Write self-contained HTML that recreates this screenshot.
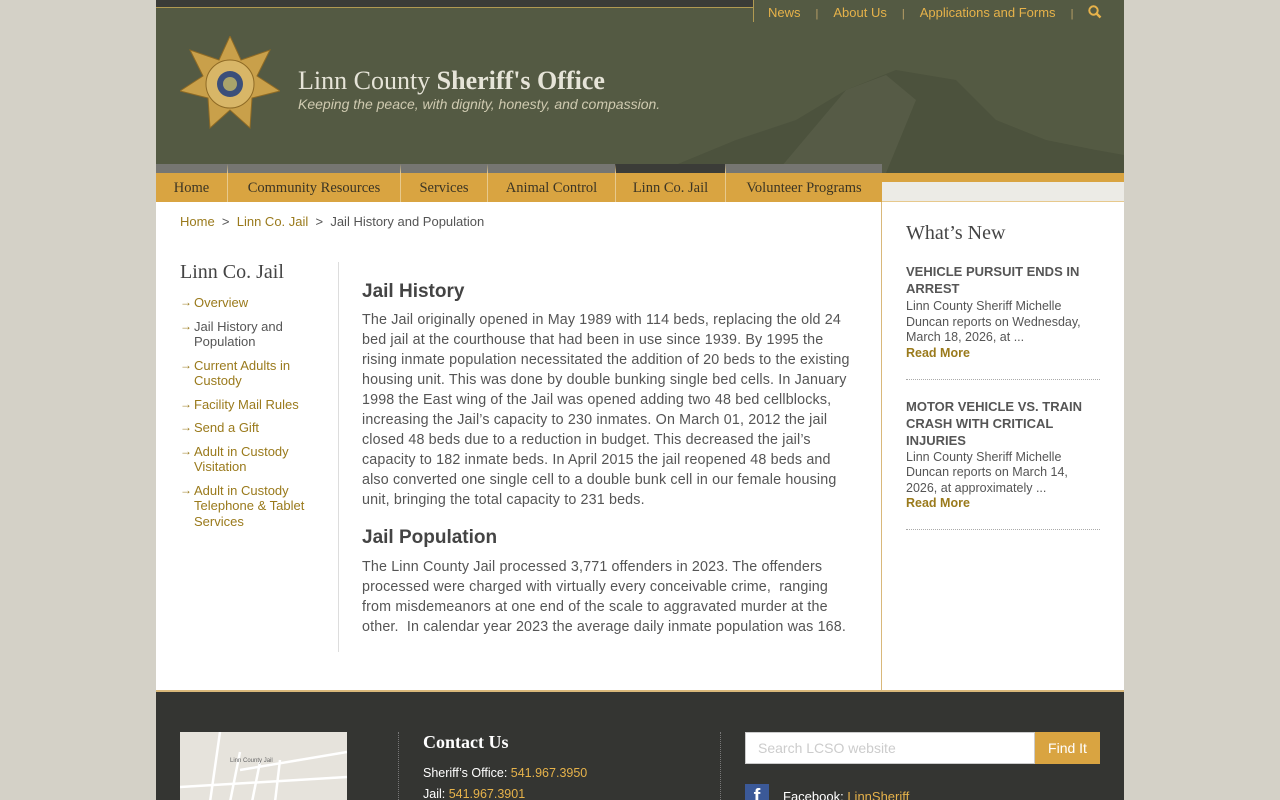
<!DOCTYPE html>
<html><head><meta charset="utf-8"><style>
*{margin:0;padding:0;box-sizing:border-box}
html,body{width:1280px;height:800px;overflow:hidden}
body{background:#d4d1c7;font-family:"Liberation Sans",sans-serif;font-size:14px;color:#555}
.slab{font-family:"Liberation Serif",serif}
#wrap{position:absolute;left:156px;top:0;width:968px;height:800px;overflow:hidden}
#hdr{position:absolute;left:0;top:0;width:968px;height:173px;background:#545a43;overflow:hidden}
#topstrip{position:absolute;left:0;top:0;width:597px;height:8px;background:#3b3c38;border-bottom:1px solid #b19a52}
#vline{position:absolute;left:597px;top:0;width:1px;height:22px;background:#b19a52}
#util{position:absolute;left:612px;top:5px;font-size:13px;color:#e6b24a;white-space:nowrap}
#util span.s{color:#bfa46a;margin:0 15px;font-size:11px}
.a{color:#9a7a1c;text-decoration:none}
#nav{position:absolute;left:0;top:164px;height:38px;width:726px;display:flex}
#nav div{background:#d9a441;border-top:9px solid #767672;border-left:1px solid #e7c98d;height:38px;line-height:30px;font-size:14.5px;color:#3c3524;text-align:center}
#navr{position:absolute;left:726px;top:173px;width:242px;height:29px;background:#ecebe6;border-top:9px solid #d9a441;border-bottom:1px solid #e7c98d}
#main{position:absolute;left:0;top:202px;width:968px;height:488px;background:#fff}
#side{position:absolute;left:725px;top:0;width:243px;height:488px;border-left:1px solid #d9b87a}
#ftr{position:absolute;left:0;top:690px;width:968px;height:110px;background:#343532;border-top:2px solid #d9b87a;overflow:hidden}
.sn li{list-style:none;position:relative;padding-left:14px;color:#9a7a1c;font-size:13px;line-height:15.5px;margin-bottom:8px}
.sn li:before{content:"→";position:absolute;left:0;top:0;color:#9a7a1c;font-size:12px}
p.b{line-height:20px;color:#555;font-size:14.3px;white-space:nowrap;letter-spacing:.15px}
h2{font-size:19px;color:#444;font-weight:bold}
.news h4{font-size:13px;color:#555;font-weight:bold;line-height:17px}
.news p{font-size:12.5px;line-height:15.5px;color:#555}
.news .rm{color:#9a7a1c;font-weight:bold;font-size:12.5px}
</style></head><body><div id="wrap">
<div id="hdr">
<svg style="position:absolute;left:500px;top:30px" width="468" height="143"><path d="M0 143 L80 110 L140 90 L190 60 L240 40 L300 50 L340 90 L390 110 L440 120 L468 125 L468 143Z" fill="#4c523d"/><path d="M120 143 L190 60 L230 45 L260 70 L230 143Z" fill="#5d634c" opacity=".6"/></svg>
<div id="topstrip"></div><div id="vline"></div>
<div id="util">News<span class="s">|</span>About Us<span class="s">|</span>Applications and Forms<span class="s">|</span><svg width="14" height="14" style="vertical-align:-2px"><circle cx="5.5" cy="5.5" r="4.2" fill="none" stroke="#e6b24a" stroke-width="2"/><path d="M8.5 8.5L12.5 12.5" stroke="#e6b24a" stroke-width="2.5"/></svg></div>
<svg style="position:absolute;left:24px;top:36px" width="100" height="100" viewBox="0 0 100 100"><polygon points="50,0 61,24 90,14 77,40 100,55 72,62 70,92 50,74 30,92 28,62 0,55 23,40 10,14 39,24" fill="#c9a04a" stroke="#8e6a25"/><circle cx="50" cy="48" r="24" fill="#d8b667" stroke="#8e6a25"/><circle cx="50" cy="48" r="13" fill="#3b4f7a"/><circle cx="50" cy="48" r="7" fill="#a9a46b"/></svg>
<div class="slab" style="position:absolute;left:142px;top:66px;font-size:26px;color:#e6e4d8">Linn County <b style="font-weight:bold">Sheriff's Office</b></div>
<div style="position:absolute;left:142px;top:96px;font-size:14px;font-style:italic;color:#cfcab0">Keeping the peace, with dignity, honesty, and compassion.</div>
</div>
<div id="nav" class="slab">
<div style="width:71px;border-left:none">Home</div><div style="width:173px">Community Resources</div><div style="width:87px">Services</div><div style="width:128px">Animal Control</div><div style="width:110px;border-top-color:#3b3c38">Linn Co. Jail</div><div style="width:157px">Volunteer Programs</div>
</div>
<div id="navr"></div>
<div id="main">
<div style="position:absolute;left:24px;top:12px;font-size:13px;color:#555"><span class="a">Home</span> &nbsp;&gt;&nbsp; <span class="a">Linn Co. Jail</span> &nbsp;&gt;&nbsp; Jail History and Population</div>
<div class="slab" style="position:absolute;left:24px;top:59px;font-size:20px;color:#444">Linn Co. Jail</div>
<ul class="sn" style="position:absolute;left:24px;top:93px;width:140px">
<li>Overview</li><li style="color:#555">Jail History and Population</li><li>Current Adults in Custody</li><li>Facility Mail Rules</li><li>Send a Gift</li><li>Adult in Custody Visitation</li><li>Adult in Custody Telephone &amp; Tablet Services</li></ul>
<div style="position:absolute;left:182px;top:60px;width:1px;height:390px;background:#ddd"></div>
<div style="position:absolute;left:206px;top:79px;width:510px">
<h2>Jail History</h2>
<p class="b" style="margin-top:7px">The Jail originally opened in May 1989 with 114 beds, replacing the old 24<br>bed jail at the courthouse that had been in use since 1939. By 1995 the<br>rising inmate population necessitated the addition of 20 beds to the existing<br>housing unit. This was done by double bunking single bed cells. In January<br>1998 the East wing of the Jail was opened adding two 48 bed cellblocks,<br>increasing the Jail’s capacity to 230 inmates. On March 01, 2012 the jail<br>closed 48 beds due to a reduction in budget. This decreased the jail’s<br>capacity to 182 inmate beds. In April 2015 the jail reopened 48 beds and<br>also converted one single cell to a double bunk cell in our female housing<br>unit, bringing the total capacity to 231 beds.</p>
<h2 style="margin-top:17px">Jail Population</h2>
<p class="b" style="margin-top:8px">The Linn County Jail processed 3,771 offenders in 2023. The offenders<br>processed were charged with virtually every conceivable crime,&nbsp; ranging<br>from misdemeanors at one end of the scale to aggravated murder at the<br>other.&nbsp; In calendar year 2023 the average daily inmate population was 168.</p>
</div>
<div id="side"><div class="news" style="position:absolute;left:24px;top:20px;width:194px">
<div class="slab" style="font-size:20px;color:#444">What’s New</div>
<h4 style="margin-top:18px">VEHICLE PURSUIT ENDS IN ARREST</h4>
<p style="margin-top:2px">Linn County Sheriff Michelle Duncan reports on Wednesday, March 18, 2026, at ...</p>
<div class="rm">Read More</div>
<div style="border-top:1px dotted #aaa;margin-top:19px"></div>
<h4 style="margin-top:18px">MOTOR VEHICLE VS. TRAIN CRASH WITH CRITICAL INJURIES</h4>
<p style="margin-top:1px">Linn County Sheriff Michelle Duncan reports on March 14, 2026, at approximately ...</p>
<div class="rm">Read More</div>
<div style="border-top:1px dotted #aaa;margin-top:19px"></div>
</div></div>
</div>
<div id="ftr">
<div style="position:absolute;left:24px;top:40px;width:167px;height:70px;background:#e6e3dc;overflow:hidden"><svg width="167" height="70"><path d="M40 0 L30 70 M60 20 L50 70 M80 30 L72 70 M100 28 L95 70 M60 38 L167 20 M0 55 L167 45" stroke="#fff" stroke-width="2.5" fill="none"/><text x="50" y="30" font-size="6" fill="#666" font-family="Liberation Sans">Linn County Jail</text></svg></div>
<div style="position:absolute;left:242px;top:40px;width:0;height:70px;border-left:1px dotted #777"></div>
<div class="slab" style="position:absolute;left:267px;top:40px;font-size:18px;color:#fff;font-weight:bold">Contact Us</div>
<div style="position:absolute;left:267px;top:71px;font-size:12.5px;color:#fff;line-height:21px">Sheriff’s Office: <span style="color:#e6b24a">541.967.3950</span><br>Jail: <span style="color:#e6b24a">541.967.3901</span></div>
<div style="position:absolute;left:564px;top:40px;width:0;height:70px;border-left:1px dotted #777"></div>
<div style="position:absolute;left:589px;top:40px;width:290px;height:32px;background:#fff;border:1px solid #ccc;color:#ccc;font-size:14px;line-height:30px;padding-left:12px">Search LCSO website</div>
<div style="position:absolute;left:879px;top:40px;width:65px;height:32px;background:#d9a441;color:#fff;font-size:14px;line-height:32px;text-align:center">Find It</div>
<div style="position:absolute;left:589px;top:92px;width:24px;height:24px;background:#3b5998;color:#fff;font-weight:bold;font-size:20px;text-align:center;line-height:26px">f</div>
<div style="position:absolute;left:627px;top:97px;font-size:13px;color:#fff">Facebook: <span style="color:#e6b24a">LinnSheriff</span></div>
</div>
</div></body></html>
